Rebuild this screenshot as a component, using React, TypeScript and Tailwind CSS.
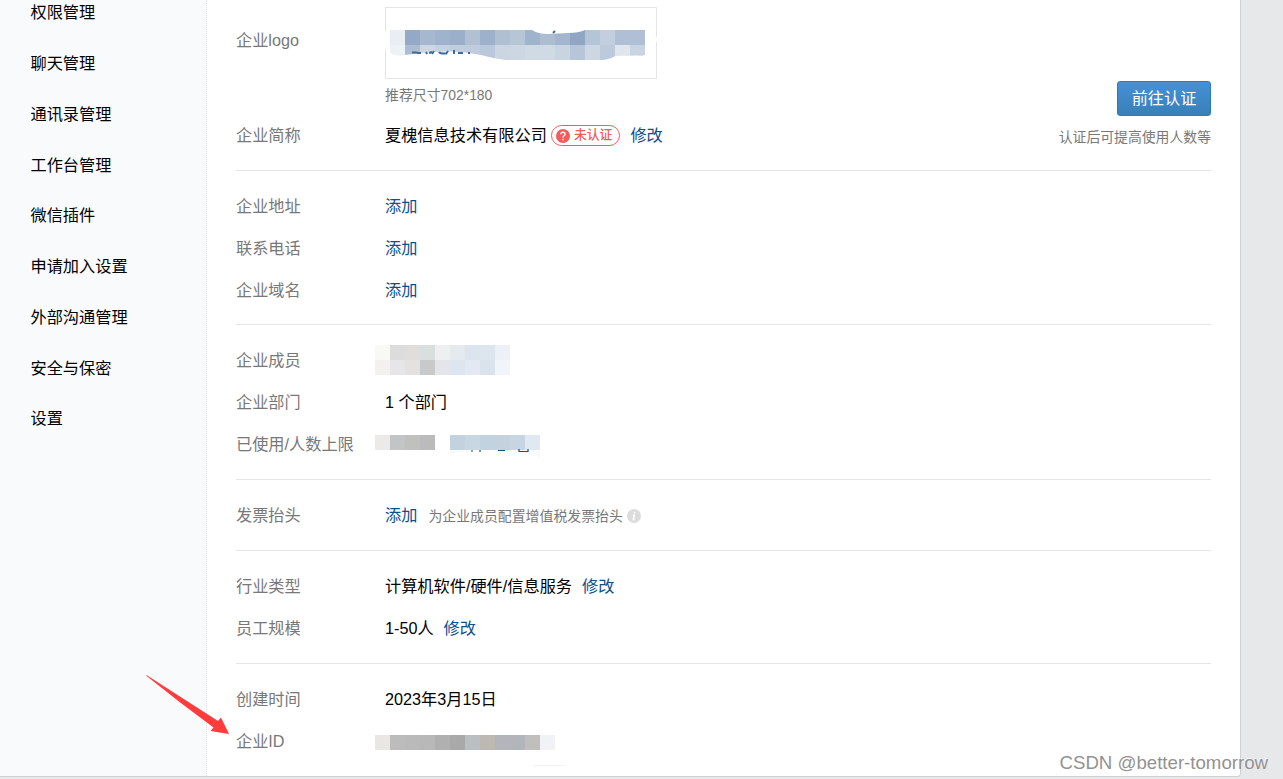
import type { ReactNode } from 'react'

const MENU = ['权限管理', '聊天管理', '通讯录管理', '工作台管理', '微信插件', '申请加入设置', '外部沟通管理', '安全与保密', '设置']

const LOGO_TOP = ['#e8eef2', '#93a9c5', '#a6b8cf', '#9fb2ce', '#9bafcb', '#b1c1d3', '#9db1cd', '#b0c0d2', '#b7c6d7', '#9eb3cc', '#acbdd2', '#a3b5cf', '#90a6c3', '#b5c5d8', '#c3cfdf', '#b0bfd5', '#b0bfd5']
const LOGO_BOTTOM = ['#edf2f6', '#adbdd1', '#ccd7e4', '#c5d0e0', '#c0cddf', '#c0ccdd', '#b9c8da', '#cbd6e2', '#ccd7e3', '#d0dae5', '#d0dae5', '#c8d4e1', '#b8c4d8', '#cdd7e4', '#bdcadb', '#dfe6ee', '#c9d4e2']

/** Pixelated cover over private values, 15px cells. */
function Mosaic({ rows, className }: { rows: string[][]; className?: string }) {
  const width = rows[0].length * 15
  const height = rows.length * 15
  return (
    <svg width={width} height={height} viewBox={`0 0 ${width} ${height}`} shapeRendering="crispEdges" className={className}>
      {rows.map((row, y) => row.map((fill, x) => <rect key={`${x}-${y}`} x={x * 15} y={y * 15} width="15" height="15" fill={fill} />))}
    </svg>
  )
}

function LogoImage() {
  return (
    <svg width="272" height="72" viewBox="0 0 272 72" className="block">
      <rect x="0.5" y="0.5" width="271" height="71" fill="#fff" stroke="#e4e5e7" />
      <rect x="-1" y="24" width="6" height="18" fill="#fff" />
      <rect x="266" y="30" width="6" height="5" fill="#fff" />
      <clipPath id="logo-cover">
        <path d="M5 23H147Q153 27 163 27L183 26Q194 26 200 23H260V48Q258 49 252 48.5L230 49Q226 52 217 53H120Q107 51 96 48Q83 45 68 44.500Q48 44 36 46L20 48Q12 50 5 46Z" />
      </clipPath>
      <g clipPath="url(#logo-cover)" shapeRendering="crispEdges">
        {LOGO_TOP.map((fill, i) => <rect key={i} x={5 + i * 15} y="23" width="15" height="15" fill={fill} />)}
        {LOGO_BOTTOM.map((fill, i) => <rect key={i} x={5 + i * 15} y="38" width="15" height="15" fill={fill} />)}
      </g>
      <path d="M27 45.500h5M32 46h4M41 45l1 2M44 46l3-1M49 44l-2 3M54 45q1 2 7 1.500M63 44l-2 3M69 43v4M73 46h5M83 46h2M168 26l2-2" fill="none" stroke="#41699b" strokeWidth="2" />
    </svg>
  )
}

function Row({ label, children }: { label: string; children: ReactNode }) {
  return (
    <div className="flex h-[42px] items-center">
      <div className="w-[149px] shrink-0 text-[#787878]">{label}</div>
      <div className="flex items-center">{children}</div>
    </div>
  )
}

function Action({ children, className = '' }: { children: ReactNode; className?: string }) {
  return <a href="#" className={`text-[#0d4e8b] ${className}`}>{children}</a>
}

export default function App() {
  return (
    <div className="relative h-[779px] w-[1283px] overflow-hidden bg-[#e7e8ea] font-['Liberation_Sans','Noto_Sans_CJK_SC',sans-serif] text-[16.2px] leading-6 text-black">
      <div className="flex h-[777px] w-[1241px] overflow-hidden rounded-br border-r border-b border-[#d0d1d3] bg-white">
        <nav className="w-[207px] shrink-0 border-r border-dotted border-[#e0e3e8] bg-[#f9fafc]">
          <ul className="-mt-[13px] pl-[30.5px]">
            {MENU.map((item) => (
              <li key={item} className="flex h-[50.75px] items-center">{item}</li>
            ))}
          </ul>
        </nav>

        <main className="w-[1004px] shrink-0 pl-[29px]">
          <section className="flex h-[171px] justify-between border-b border-[#e4e5e7]">
            <div>
              <div className="flex h-[114px] pt-[7px]">
                <div className="w-[149px] pt-[21px] text-[#787878]">企业logo</div>
                <div>
                  <LogoImage />
                  <p className="mt-1 text-[13.9px] leading-6 text-[#787878]">推荐尺寸702*180</p>
                </div>
              </div>
              <Row label="企业简称">
                <span>夏槐信息技术有限公司</span>
                <span className="mt-px ml-1 flex h-[21px] w-[69px] items-center rounded-full border-[1.5px] border-[#f05b5b] pl-[4px] text-[12.8px] font-medium leading-none text-[#f05b5b]">
                  <svg width="14" height="14" viewBox="0 0 14 14" className="mr-1 shrink-0">
                    <circle cx="7" cy="7" r="7" fill="#f05b5b" />
                    <path d="M4.9 5.3Q5 3.3 7 3.3T9.1 5.2Q9.1 6.3 7.9 7Q7 7.5 7 8.4M7 9.7v1.5" fill="none" stroke="#fff" strokeWidth="1.4" />
                  </svg>
                  未认证
                </span>
                <Action className="ml-[10.5px]">修改</Action>
              </Row>
            </div>
            <div className="flex flex-col items-end pt-[81px]">
              <button className="h-[35px] w-[94px] rounded-[3px] border border-[#2b7bbf] bg-linear-to-b from-[#4690d6] to-[#3880b8] pb-0.5 text-[16.2px] text-white">前往认证</button>
              <p className="mt-[9px] text-[13.85px] leading-6 text-[#787878]">认证后可提高使用人数等</p>
            </div>
          </section>

          <section className="h-[154px] border-b border-[#e4e5e7] pt-3.5">
            <Row label="企业地址"><Action>添加</Action></Row>
            <Row label="联系电话"><Action>添加</Action></Row>
            <Row label="企业域名"><Action>添加</Action></Row>
          </section>

          <section className="h-[155px] border-b border-[#e4e5e7] pt-3.5">
            <Row label="企业成员">
              <Mosaic
                className="-ml-2.5"
                rows={[
                  ['#f8f8f7', '#dcdcdd', '#dfdedc', '#d9dedf', '#eeeff1', '#e5eaee', '#dce4ed', '#dde5ee', '#edf1f7'],
                  ['#f2f1ef', '#e6e6e9', '#e3e2e0', '#c8c9cb', '#e4e5e8', '#dde5ee', '#e3e8f2', '#dae3eb', '#f1f5f9'],
                ]}
              />
            </Row>
            <Row label="企业部门">1 个部门</Row>
            <Row label="已使用/人数上限">
              <Mosaic className="-mt-[3px] -ml-2.5" rows={[['#ebeae8', '#c3c4c6', '#c0c0be', '#bbbbbd']]} />
              <svg width="91" height="24" viewBox="0 0 91 24" className="mt-1.5 ml-[15px]">
                <g shapeRendering="crispEdges">
                  {['#c4d2df', '#c8d7e1', '#c1d3de', '#c5d1df', '#c7d5e2', '#e0e9f2'].map((fill, i) => (
                    <rect key={i} x={i * 15} width="15" height="15" fill={fill} />
                  ))}
                </g>
                <path d="M0 16h22l-12 2H0zM78 16h12v7z" fill="#f7f9fb" />
                <path d="M21 16h2M30 15v2M48 15.5h7M69 14v3M78 14v3M69 16.5h9" stroke="#0d4e8b" strokeWidth="1.2" />
              </svg>
            </Row>
          </section>

          <section className="h-[71px] border-b border-[#e4e5e7] pt-3.5">
            <Row label="发票抬头">
              <Action>添加</Action>
              <span className="mt-px ml-[11px] text-[13.9px] text-[#787878]">为企业成员配置增值税发票抬头</span>
              <svg width="14" height="14" viewBox="0 0 14 14" className="mt-0.5 ml-1">
                <circle cx="7" cy="7" r="7" fill="#dcdcdc" />
                <path d="M7.7 2.8l-.3 1.5M6.1 6h1.1l-.8 4.6h1.2" fill="none" stroke="#fff" strokeWidth="1.5" />
              </svg>
            </Row>
          </section>

          <section className="h-[113px] border-b border-[#e4e5e7] pt-3.5">
            <Row label="行业类型">计算机软件/硬件/信息服务<Action className="ml-2.5">修改</Action></Row>
            <Row label="员工规模">1-50人<Action className="ml-2.5">修改</Action></Row>
          </section>

          <section className="pt-3.5">
            <Row label="创建时间">2023年3月15日</Row>
            <Row label="企业ID">
              <Mosaic className="mt-[3px] -ml-2.5" rows={[['#e8e7e5', '#bcbcbd', '#bababa', '#b8b8b9', '#b0b0b1', '#a9a9aa', '#bac0c1', '#bdb8b1', '#b3b5bc', '#b2b5b9', '#c1bfbd', '#f0f2f5']]} />
            </Row>
            <div className="mt-[3px] ml-[297px] h-px w-8 bg-[#f3f3f4]" />
          </section>
        </main>
      </div>

      <svg width="84" height="60" viewBox="0 0 84 60" className="absolute top-[675px] left-[145.500px]">
        <path d="M0 0.500Q1 0 2 1L72 46L75 42.500L83 59L64.500 56L67.500 52.500Q34 28 0 0.500Z" fill="#ff3b3b" />
      </svg>
      <span className="absolute right-[15px] bottom-1 text-[18.65px] whitespace-nowrap text-[#929292] [text-shadow:-1px_-1px_0_#ffffffaa]">CSDN @better-tomorrow</span>
    </div>
  )
}
